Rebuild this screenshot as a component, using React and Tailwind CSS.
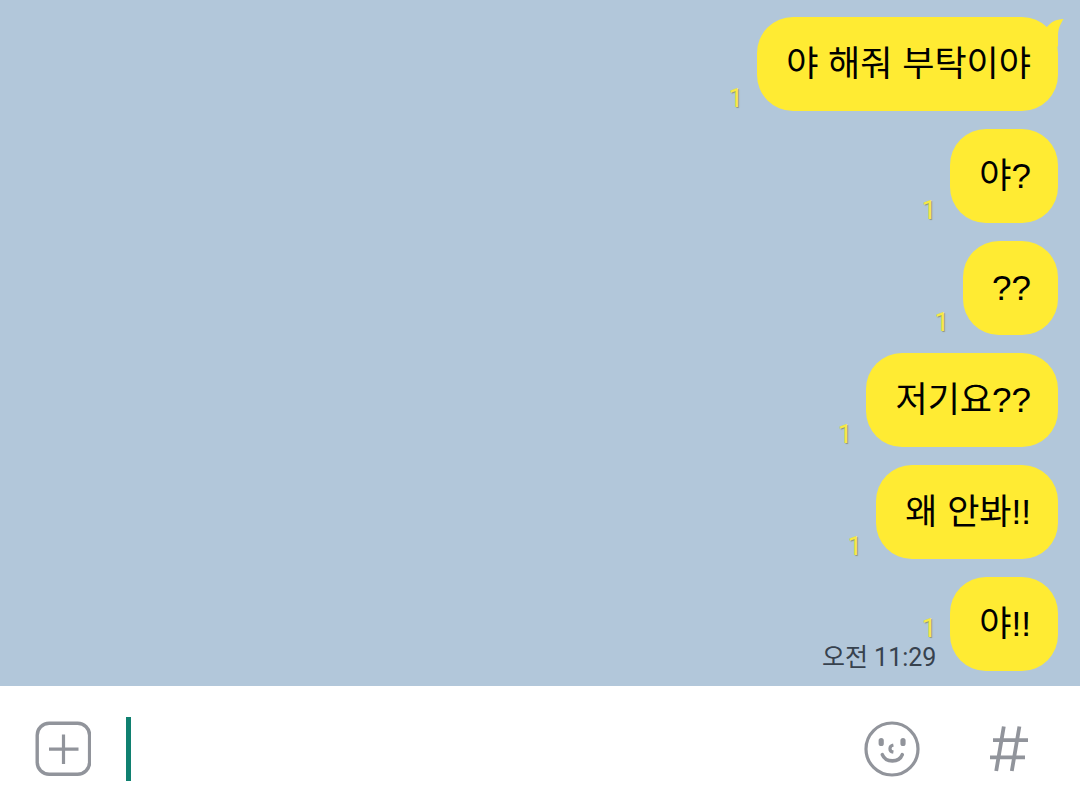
import React from 'react';

const messages = [
  { id: 1, text: '야 해줘 부탁이야', unread: 1, tail: true },
  { id: 2, text: '야?', unread: 1 },
  { id: 3, text: '??', unread: 1 },
  { id: 4, text: '저기요??', unread: 1 },
  { id: 5, text: '왜 안봐!!', unread: 1 },
  { id: 6, text: '야!!', unread: 1, time: '오전 11:29' },
];

const BubbleTail = () => (
  <svg
    className="absolute -top-px -right-1.5 w-5 h-8"
    viewBox="0 0 20 32"
    fill="#ffeb33"
    aria-hidden="true"
  >
    <path d="M3 11C7 6 12 3.2 19.5 3C16.5 8 14.2 12 14 19V31L3 20Z" />
  </svg>
);

const PlusIcon = () => (
  <svg className="w-14 h-14" viewBox="0 0 56 56" fill="none" stroke="#91949b" aria-hidden="true">
    <rect x="2.2" y="2.2" width="52.4" height="51" rx="12" strokeWidth="3.4" />
    <path d="M28.5 13.5V43M14 28.2H43.5" strokeWidth="3.2" />
  </svg>
);

const SmileIcon = () => (
  <svg className="w-14 h-14" viewBox="0 0 56 56" fill="none" stroke="#91949b" strokeLinecap="round" aria-hidden="true">
    <circle cx="28" cy="28" r="26" strokeWidth="3.2" />
    <path d="M17.2 19.6V22.4M39 19.6V22.4" strokeWidth="5.2" />
    <path d="M29.4 24C24.8 25 24.8 30.4 29.4 31.2" strokeWidth="3.2" strokeLinecap="butt" />
    <path d="M18.3 33.6C21.8 42 35 42 38.3 33.6" strokeWidth="3.6" />
  </svg>
);

const HashIcon = () => (
  <svg className="w-10 h-12" viewBox="0 0 40 48" fill="none" stroke="#91949b" strokeWidth="3.8" aria-hidden="true">
    <path d="M14.8 1.5L7.2 46M30.4 1.5L22.8 46M4 15.2H39M1 32.3H36" />
  </svg>
);

const Message = ({ text, unread, time, tail }) => (
  <li className="flex items-end justify-end gap-3.5">
    <div className="flex flex-col items-end gap-1 font-[Roboto,'Noto_Sans_CJK_KR',sans-serif]">
      <span className="text-[26px] leading-[26px] text-[#f7e945] [text-shadow:1px_1px_1px_#8f9678]">{unread}</span>
      {time && <time className="text-[25px] leading-[26px] text-[#37424e]">{time}</time>}
    </div>
    <div className="relative flex h-[94px] items-center rounded-[36px] bg-[#ffeb33] pr-[27px] pl-[29px]">
      <p className="text-[35px] leading-10 text-black">{text}</p>
      {tail && <BubbleTail />}
    </div>
  </li>
);

const App = () => {
  return (
    <div className="flex min-h-screen flex-col bg-white font-['Liberation_Sans','Noto_Sans_CJK_KR',sans-serif]">
      <main className="flex-1 bg-[#b2c7da] pt-[17px] pr-[22px] pb-[15px] pl-6">
        <ul className="flex flex-col gap-[18px]">
          {messages.map((message) => (
            <Message key={message.id} {...message} />
          ))}
        </ul>
      </main>

      {/* Message composer */}
      <form className="flex h-[126px] items-center bg-white pr-8 pl-[35px]" onSubmit={(e) => e.preventDefault()}>
        <button type="button" aria-label="첨부">
          <PlusIcon />
        </button>
        <input
          type="text"
          aria-label="메시지"
          className="mx-[35px] h-16 min-w-0 flex-1 border-l-[5px] border-[#108070] px-2 text-[35px] outline-none"
        />
        <div className="flex items-center gap-[69px] pr-[19px]">
          <button type="button" aria-label="이모티콘">
            <SmileIcon />
          </button>
          <button type="button" aria-label="샵검색">
            <HashIcon />
          </button>
        </div>
      </form>
    </div>
  );
};

export default App;
